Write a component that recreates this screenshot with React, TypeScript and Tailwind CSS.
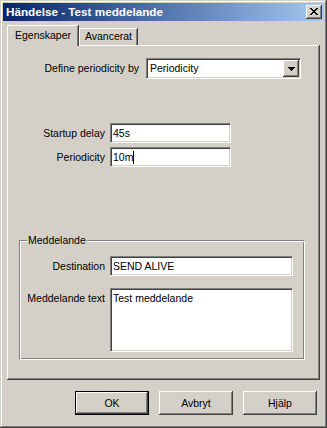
export default function App() {
  const sunken =
    "bg-white border border-t-[#808080] border-l-[#808080] border-r-white border-b-white shadow-[inset_1px_1px_0_#404040,inset_-1px_-1px_0_#d4d0c8]";
  const raised =
    "bg-[#d4d0c8] shadow-[inset_-1px_-1px_0_#404040,inset_1px_1px_0_#ffffff,inset_-2px_-2px_0_#808080]";
  const etched =
    "border border-t-[#808080] border-l-[#808080] border-r-white border-b-white shadow-[inset_1px_1px_0_#ffffff,inset_-1px_-1px_0_#808080]";
  const tabStyle =
    "bg-[#d4d0c8] shadow-[inset_-1px_0_0_#404040,inset_1px_1px_0_#ffffff,inset_-2px_0_0_#808080] flex items-center justify-center";

  return (
    <div className="w-[327px] h-[428px] bg-[#d4d0c8] p-[3px] flex flex-col font-['Liberation_Sans',Arial,sans-serif] text-[10.5px] leading-none text-black shadow-[inset_-1px_-1px_0_#404040,inset_1px_1px_0_#d4d0c8,inset_-2px_-2px_0_#808080,inset_2px_2px_0_#ffffff]">
      {/* Title bar */}
      <div className="h-[18px] flex items-center bg-linear-to-r from-[#0a246a] to-[#a6caf0] pl-[3px] pr-[2px]">
        <span className="flex-1 text-white font-bold text-[11.7px]">Händelse - Test meddelande</span>
        <div className={`w-[16px] h-[14px] ${raised} flex items-center justify-center pb-[1px]`}>
          <svg width="8" height="7" viewBox="0 0 8 7" shapeRendering="crispEdges">
            <path d="M0 0h2v1h1v1h2V1h1V0h2v1H7v1H6v1H5v1h1v1h1v1h1v1H6V6H5V5H3v1H2v1H0V6h1V5h1V4h1V3H2V2H1V1H0z" fill="#000" />
          </svg>
        </div>
      </div>

      <div className="px-[4px] pt-[4px]">
        {/* Tabs */}
        <div className="flex items-end h-[20px]">
          <div className={`relative z-10 w-[72px] h-[21px] -mb-[1px] pb-[1px] ${tabStyle}`}>Egenskaper</div>
          <div className={`w-[59px] h-[17px] ${tabStyle}`}>Avancerat</div>
        </div>

        {/* Pane */}
        <div className="h-[335px] pt-[13px] pl-[1px] shadow-[inset_-1px_-1px_0_#404040,inset_1px_1px_0_#ffffff,inset_-2px_-2px_0_#808080]">
          <div className="flex items-center h-[21px]">
            <div className="w-[131px] text-right">Define periodicity by</div>
            <div className={`ml-[7px] w-[155px] h-[21px] p-[1px] flex items-center ${sunken}`}>
              <span className="flex-1 pl-[2px]">Periodicity</span>
              <div className={`w-[16px] h-[17px] ${raised} flex items-center justify-center`}>
                <svg width="7" height="4" viewBox="0 0 7 4" shapeRendering="crispEdges">
                  <path d="M0 0h7v1H6v1H5v1H4v1H3V3H2V2H1V1H0z" fill="#000" />
                </svg>
              </div>
            </div>
          </div>

          <div className="flex items-center h-[20px] mt-[44px]">
            <div className="w-[97px] text-right">Startup delay</div>
            <div className={`ml-[5px] w-[121px] h-[20px] flex items-center pl-[2px] ${sunken}`}>45s</div>
          </div>
          <div className="flex items-center h-[20px] mt-[4px]">
            <div className="w-[97px] text-right">Periodicity</div>
            <div className={`ml-[5px] w-[121px] h-[20px] flex items-center pl-[2px] ${sunken}`}>
              <span>10m</span>
              <span className="w-[1px] h-[13px] bg-black" />
            </div>
          </div>

          {/* Group box */}
          <div className={`relative mt-[73px] ml-[11px] w-[286px] h-[120px] pt-[15px] ${etched}`}>
            <div className="absolute -top-[6px] left-[7px] px-[1px] bg-[#d4d0c8]">Meddelande</div>
            <div className="flex items-center h-[20px]">
              <div className="w-[85px] text-right">Destination</div>
              <div className={`ml-[5px] w-[183px] h-[20px] flex items-center pl-[2px] ${sunken}`}>SEND ALIVE</div>
            </div>
            <div className="flex items-start mt-[12px]">
              <div className="w-[85px] text-right pt-[5px]">Meddelande text</div>
              <div className={`ml-[5px] w-[183px] h-[64px] pl-[2px] pt-[4px] ${sunken}`}>Test meddelande</div>
            </div>
          </div>
        </div>
      </div>

      {/* Buttons */}
      <div className="flex justify-end gap-[10px] pr-[7px] mt-[11px]">
        <div className="w-[74px] h-[24px] border border-black bg-[#d4d0c8] shadow-[inset_-1px_-1px_0_#404040,inset_1px_1px_0_#ffffff,inset_-2px_-2px_0_#808080] flex items-center justify-center">OK</div>
        <div className={`w-[74px] h-[24px] ${raised} flex items-center justify-center`}>Avbryt</div>
        <div className={`w-[74px] h-[24px] ${raised} flex items-center justify-center`}>Hjälp</div>
      </div>
    </div>
  );
}
